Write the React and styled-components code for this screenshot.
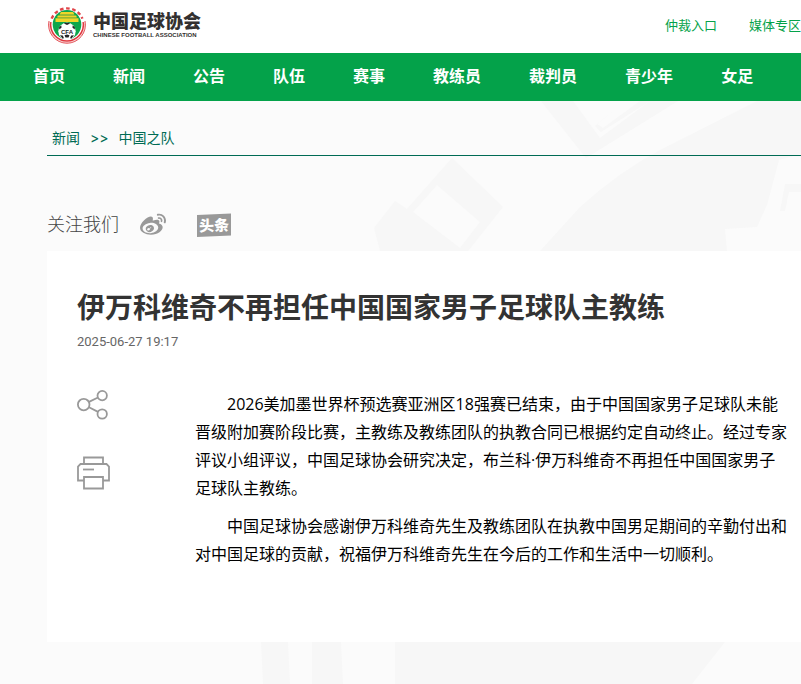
import React from 'react';
import styled, { createGlobalStyle } from 'styled-components';
import { FaWeibo } from 'react-icons/fa';

const GlobalStyle = createGlobalStyle`
  * {
    box-sizing: border-box;
  }

  body {
    margin: 0;
    background: #fbfbfb;
    font-family: 'Open Sans', 'Noto Sans CJK SC', sans-serif;
    color: #333333;
  }

  a {
    color: inherit;
    text-decoration: none;
  }
`;

const Page = styled.div`
  position: relative;
  min-height: 100vh;
  overflow: hidden;
`;

const Header = styled.header`
  display: flex;
  justify-content: space-between;
  height: 53px;
  padding-left: 47px;
  background: #ffffff;
`;

const Brand = styled.a`
  display: flex;
  align-items: center;
  gap: 6px;
  height: 50px;
`;

const BrandText = styled.div`
  display: flex;
  flex-direction: column;
  color: #333030;
`;

const BrandName = styled.span`
  font-size: 18px;
  font-weight: 900;
  line-height: 20px;
`;

const BrandSubtitle = styled.span`
  font-family: 'Liberation Sans', sans-serif;
  font-size: 6px;
  font-weight: 700;
  line-height: 8px;
`;

const TopLinks = styled.div`
  display: flex;
  align-items: center;
  gap: 32px;
  height: 48px;
  font-size: 13px;
  color: #04a24a;
`;

const Nav = styled.nav`
  display: flex;
  height: 48px;
  padding-left: 9px;
  background: #04a24a;
`;

const NavLink = styled.a`
  padding: 0 24px;
  font-size: 16px;
  font-weight: 700;
  line-height: 46px;
  white-space: nowrap;
  color: #ffffff;
`;

const Main = styled.main`
  position: relative;
  padding: 0 0 42px 47px;
`;

const Backdrop = styled.svg`
  position: absolute;
  top: 101px;
  left: 0;
  fill: #f7f7f7;
`;

const Breadcrumb = styled.div`
  display: flex;
  align-items: center;
  gap: 10px;
  height: 55px;
  padding: 18px 5px 0;
  border-bottom: 1px solid #006b54;
  font-size: 14px;
  color: #006b54;
`;

const Separator = styled.span`
  font-family: Inter, sans-serif;
`;

const FollowBar = styled.div`
  display: flex;
  align-items: center;
  height: 95px;
  padding-top: 42px;
  font-size: 18px;
  font-weight: 300;
  color: #444444;
`;

const FollowLabel = styled.span`
  padding-bottom: 4px;
`;

const SocialLink = styled.a`
  display: flex;
  margin-left: ${props => props.$gap}px;
  color: #999999;
`;

const Article = styled.article`
  min-height: 391px;
  padding: 36px 12px 64px 30px;
  background: #ffffff;
`;

const Title = styled.h1`
  margin: 0;
  font-size: 28px;
  font-weight: 700;
  line-height: 40px;
  color: #333333;
`;

const PublishTime = styled.time`
  display: block;
  margin-top: 5px;
  font-family: Roboto, sans-serif;
  font-size: 13px;
  line-height: 20px;
  color: #666666;
`;

const ArticleBody = styled.div`
  display: flex;
  margin-top: 38px;
`;

const Tools = styled.div`
  display: flex;
  flex-direction: column;
  flex: 0 0 118px;
  align-items: flex-start;
  gap: 34px;
`;

const ToolButton = styled.button`
  display: flex;
  padding: 0;
  border: none;
  background: none;
  color: #999999;
  cursor: pointer;
`;

const Content = styled.div`
  flex: 1;
  min-width: 0;
  color: #000000;
`;

const Paragraph = styled.p`
  margin: 0 0 10px;
  font-size: 16px;
  line-height: 28px;
  text-indent: 32px;
`;

const NAV_ITEMS = ['首页', '新闻', '公告', '队伍', '赛事', '教练员', '裁判员', '青少年', '女足'];

const PARAGRAPHS = [
  '2026美加墨世界杯预选赛亚洲区18强赛已结束，由于中国国家男子足球队未能晋级附加赛阶段比赛，主教练及教练团队的执教合同已根据约定自动终止。经过专家评议小组评议，中国足球协会研究决定，布兰科·伊万科维奇不再担任中国国家男子足球队主教练。',
  '中国足球协会感谢伊万科维奇先生及教练团队在执教中国男足期间的辛勤付出和对中国足球的贡献，祝福伊万科维奇先生在今后的工作和生活中一切顺利。',
];

const Emblem = () => (
  <svg width="40" height="40" viewBox="0 0 40 40" aria-hidden="true">
    <circle cx="20" cy="20" r="18.8" fill="#ffffff" />
    {/* 上方弧形文字与下方花环 */}
    <path d="M4.6 13.6A16.7 16.7 0 0 1 35.4 13.6" fill="none" stroke="#e0454a" strokeWidth="2.4" strokeDasharray="3.6 2.6" />
    <path d="M2 16A18.4 18.4 0 1 0 38 16" fill="none" stroke="#e0353c" strokeWidth="0.9" />
    <path d="M3.8 17A16.4 16.4 0 1 0 36.2 17" fill="none" stroke="#e0353c" strokeWidth="1.5" />
    <path d="M2.9 17A17.4 17.4 0 1 0 37.1 17" fill="none" stroke="#e98f92" strokeWidth="0.8" strokeDasharray="1.2 0.6" />
    <ellipse cx="20" cy="19.6" rx="14.3" ry="14.6" fill="#0da64c" />
    <path d="M14 7h12l1.5 2.6h-15zM11 10.6h18l1 1.6H10zM8.5 13.2h23v3.8h-23z" fill="#f0d52a" />
    <path d="M13 9.6h14v1H13zM10.5 12.2h19v1h-19z" fill="#b9b62a" />
    <circle cx="20" cy="26.3" r="8.7" fill="#ffffff" />
    <path d="M17 18.4l3 1.6 3-1.6-1-.6h-4zM12 22.5l2.2-2.3.4 2.4-2.2 2zM28 22.5l-2.2-2.3-.4 2.4 2.2 2zM13 30.3l2.8.2 1.2 2.8-1.6.2zM27 30.3l-2.8.2-1.2 2.8 1.6.2zM17.5 30.2l2.5-.8 2.5.8-1 2.4h-3z" fill="#262626" />
    <text x="20" y="28.6" textAnchor="middle" fontFamily="Liberation Sans, sans-serif" fontWeight="700" fontSize="6" fill="#222222">CFA</text>
  </svg>
);

const ToutiaoIcon = () => (
  <svg width="34" height="24" viewBox="0 0 34 24" aria-hidden="true">
    <path d="M0 2L34 0.5V22.5L0 24z" fill="#999999" />
    <text x="17" y="18" transform="rotate(-2 17 12)" textAnchor="middle" fontFamily="Noto Sans CJK SC, sans-serif" fontWeight="900" fontSize="15" fill="#ffffff">头条</text>
  </svg>
);

const ShareIcon = () => (
  <svg width="32" height="32" viewBox="0 0 32 32" fill="none" stroke="currentColor" strokeWidth="1.8" aria-hidden="true">
    <circle cx="6.7" cy="14.6" r="5.8" />
    <circle cx="25.2" cy="5.6" r="4.7" />
    <circle cx="25.2" cy="24" r="4.7" />
    <path d="M12 11.9l9-4.4M12 17.2l9 4.7" />
  </svg>
);

const PrintIcon = () => (
  <svg width="33" height="34" viewBox="0 0 33 34" fill="none" stroke="currentColor" strokeWidth="1.8" aria-hidden="true">
    <path d="M7 8V1.5h19V8" />
    <path d="M7 24.5H1V10.5L3.5 8h26l2.5 2.5v14h-6" />
    <path d="M7 21h19v11.5H7z" />
    <path d="M6 13.5h11" />
  </svg>
);

// 卡片后面的浅色底纹
const BackdropArt = () => (
  <Backdrop width="801" height="583" viewBox="0 101 801 583" aria-hidden="true">
    <path d="M541 101L586 158L678 101H650L600 138L573 101z" />
    <path d="M617 108L595 126L601 132L650 101H640L603 128L597 124z" />
    <path d="M452 158L503 207L468 251H380L374 228L395 201L407 209zM437 185L413 212L460 248L480 222z" fillRule="evenodd" />
    <path d="M757 101L660 150Q620 171 580 207L540 251H727L725 229L757 227L767 205L779 160L801 154V101z" />
    <path d="M785 184H801V192H789L785 211H780z" />
    <path d="M261 642H288L290 684H263zM312 642H341L343 684H312zM395 642H725L692 684H395z" />
  </Backdrop>
);

const App = () => {
  return (
    <Page lang="zh-CN">
      <GlobalStyle />
      <BackdropArt />
      <Header>
        <Brand href="#" aria-label="中国足球协会">
          <Emblem />
          <BrandText>
            <BrandName>中国足球协会</BrandName>
            <BrandSubtitle>CHINESE FOOTBALL ASSOCIATION</BrandSubtitle>
          </BrandText>
        </Brand>
        <TopLinks>
          <a href="#">仲裁入口</a>
          <a href="#">媒体专区</a>
        </TopLinks>
      </Header>

      <Nav>
        {NAV_ITEMS.map((item) => (
          <NavLink key={item} href="#">{item}</NavLink>
        ))}
      </Nav>

      <Main>
        <Breadcrumb>
          <a href="#">新闻</a>
          <Separator>&gt;&gt;</Separator>
          <a href="#">中国之队</a>
        </Breadcrumb>

        <FollowBar>
          <FollowLabel>关注我们</FollowLabel>
          <SocialLink href="#" $gap={21} aria-label="微博">
            <FaWeibo size={26} />
          </SocialLink>
          <SocialLink href="#" $gap={31} aria-label="头条">
            <ToutiaoIcon />
          </SocialLink>
        </FollowBar>

        <Article>
          <Title>伊万科维奇不再担任中国国家男子足球队主教练</Title>
          <PublishTime dateTime="2025-06-27T19:17">2025-06-27 19:17</PublishTime>
          <ArticleBody>
            <Tools>
              <ToolButton type="button" aria-label="分享">
                <ShareIcon />
              </ToolButton>
              <ToolButton type="button" aria-label="打印" onClick={() => window.print()}>
                <PrintIcon />
              </ToolButton>
            </Tools>
            <Content>
              {PARAGRAPHS.map((text) => (
                <Paragraph key={text}>{text}</Paragraph>
              ))}
            </Content>
          </ArticleBody>
        </Article>
      </Main>
    </Page>
  );
};

export default App;
